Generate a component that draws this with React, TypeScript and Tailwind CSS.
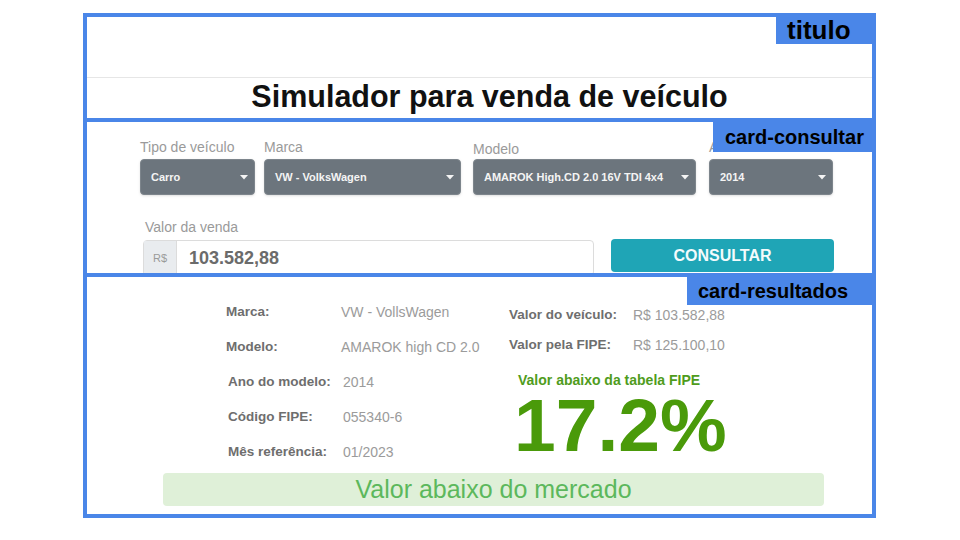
import React from 'react'

function Tag({ text, className }: { text: string; className: string }) {
  return (
    <div
      className={`absolute right-0 flex items-center bg-[#4a86e8] text-[20px] font-bold text-black ${className}`}
    >
      {text}
    </div>
  )
}

function Select({ label, value, width, lower }: { label: string; value: string; width: string; lower?: boolean }) {
  return (
    <div className={`flex flex-col ${width}`}>
      <span className={`text-[14px] leading-[20px] text-[#9a9a9a] ${lower ? 'translate-y-[2px]' : ''}`}>{label}</span>
      <div className="mt-[2px] flex h-[36px] items-center justify-between rounded-[4px] border border-[#7d858c] bg-[#6c757d] pl-[10px] pr-[6px] shadow-sm">
        <span className="whitespace-nowrap text-[11px] font-bold text-[#f4f4f4]">{value}</span>
        <svg width="8" height="5" viewBox="0 0 8 5" className="ml-2 shrink-0">
          <path d="M0 0h8L4 4.5z" fill="#f4f4f4" />
        </svg>
      </div>
    </div>
  )
}

const left = [
  ['Marca:', 'VW - VollsWagen'],
  ['Modelo:', 'AMAROK high CD 2.0'],
  ['Ano do modelo:', '2014'],
  ['Código FIPE:', '055340-6'],
  ['Mês referência:', '01/2023'],
]

const right = [
  ['Valor do veículo:', 'R$ 103.582,88'],
  ['Valor pela FIPE:', 'R$ 125.100,10'],
]

export default function App() {
  return (
    <div className="h-[540px] w-[960px] bg-white pl-[83px] pt-[13px] font-['Liberation_Sans',Arial,sans-serif]">
      <div className="flex h-[505px] w-[793px] flex-col border-4 border-[#4a86e8]">
        {/* titulo */}
        <section className="relative h-[101px] shrink-0">
          <Tag text="titulo" className="top-0 h-[27px] w-[96px] pl-[11px] text-[26px]" />
          <div className="h-[61px] border-b border-[#e6e6e6]" />
          <h1 className="h-[40px] pl-[20px] text-center text-[30.5px] font-bold leading-[37px] text-[#111]">
            Simulador para venda de veículo
          </h1>
        </section>

        {/* card-consultar */}
        <section className="relative h-[155px] shrink-0 overflow-hidden border-t-4 border-[#4a86e8] pl-[53px] pt-[15px]">
          <Tag text="card-consultar" className="top-0 z-10 h-[30px] w-[159px] pl-[12px]" />
          <div className="flex items-start">
            <Select label="Tipo de veículo" value="Carro" width="w-[115px]" />
            <div className="ml-[9px]">
              <Select label="Marca" value="VW - VolksWagen" width="w-[197px]" />
            </div>
            <div className="ml-[12px]">
              <Select label="Modelo" value="AMAROK High.CD 2.0 16V TDI 4x4" width="w-[223px]" lower />
            </div>
            <div className="ml-[13px]">
              <Select label="Ano" value="2014" width="w-[124px]" />
            </div>
          </div>
          <div className="mt-[22px] pl-[5px] text-[14px] leading-[20px] text-[#9a9a9a]">Valor da venda</div>
          <div className="flex items-start pl-[3px]">
            <div className="mt-[3px] flex h-[36px] w-[451px] rounded-[4px] border border-[#dcdcdc]">
              <div className="flex w-[33px] items-center justify-center border-r border-[#dcdcdc] bg-[#e9ecef] text-[11px] text-[#9a9a9a]">
                R$
              </div>
              <div className="flex items-center pl-[12px] text-[18px] font-bold text-[#6b6b6b]">103.582,88</div>
            </div>
            <button className="ml-[17px] mt-[2px] h-[33px] w-[223px] rounded-[4px] bg-[#1fa5b6] text-[16px] font-bold text-[#f3fbfc]">
              CONSULTAR
            </button>
          </div>
        </section>

        {/* card-resultados */}
        <section className="relative flex-1 border-t-4 border-[#4a86e8] pl-[76px] pt-[18px]">
          <Tag text="card-resultados" className="top-0 h-[28px] w-[185px] pl-[11px]" />
          <div className="flex pl-[63px]">
            <div className="grid w-[283px] grid-cols-[115px_1fr]">
              {left.map(([k, v], i) => (
                <React.Fragment key={k}>
                  <div
                    className={`flex h-[35px] items-center text-[13.5px] font-bold text-[#6e6e6e] ${i > 1 ? 'pl-[2px]' : ''}`}
                  >
                    {k}
                  </div>
                  <div className={`flex h-[35px] items-center text-[14px] text-[#9b9b9b] ${i > 1 ? 'pl-[2px]' : ''}`}>
                    {v}
                  </div>
                </React.Fragment>
              ))}
            </div>
            <div className="flex flex-col pt-[5px]">
              {right.map(([k, v]) => (
                <div key={k} className="flex h-[30px] items-center">
                  <span className="w-[124px] text-[13.5px] font-bold text-[#6e6e6e]">{k}</span>
                  <span className="text-[14px] text-[#9b9b9b]">{v}</span>
                </div>
              ))}
              <div className="mt-[12px] pl-[9px] text-[14px] font-bold leading-[16px] text-[#4f9c1c]">
                Valor abaixo da tabela FIPE
              </div>
              <div className="mt-[1px] pl-[5px] text-[75px] font-bold leading-[72px] text-[#4a9a0a]">17.2%</div>
            </div>
          </div>
          <div className="mt-[3px] flex h-[33px] w-[661px] items-center justify-center rounded-[4px] bg-[#dff0d8] text-[25px] text-[#5cb85c]">
            Valor abaixo do mercado
          </div>
        </section>
      </div>
    </div>
  )
}
